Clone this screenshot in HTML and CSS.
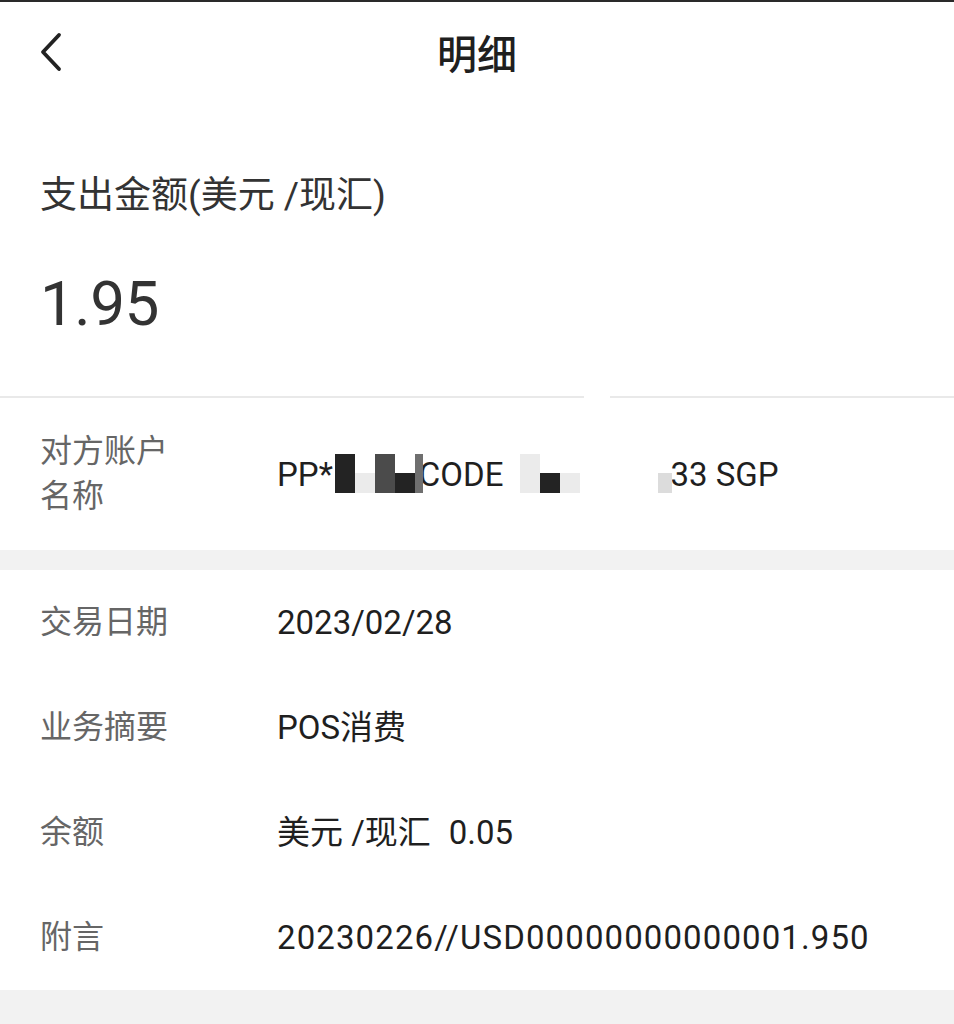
FILE: index.html
```html
<!DOCTYPE html>
<html lang="zh-CN">
<head>
<meta charset="utf-8">
<title>明细</title>
<link rel="stylesheet" href="styles.css">
</head>
<body>
<div class="page">
  <header class="topbar">
    <span class="back" aria-label="返回">
      <svg width="24" height="40" viewBox="0 0 24 40"><path d="M19 3 L3 20 L19 37" fill="none" stroke="#222" stroke-width="3.8" stroke-linecap="round" stroke-linejoin="round"/></svg>
    </span>
    <h1 class="title">明细</h1>
  </header>

  <section class="summary">
    <div class="sum-label">支出金额(美元 /现汇)</div>
    <div class="sum-amount">1.95</div>
  </section>

  <div class="divider"><span class="seg seg-left"></span><span class="seg seg-right"></span></div>

  <div class="row row-tall">
    <div class="label label-wrap">对方账户<br>名称</div>
    <div class="value">
      <span>PP*</span>
      <span class="mz mz1">
        <i class="c-d r2"></i><i></i><i class="c-m r2"></i><i></i><i class="c-g r2"></i>
        <i class="c-l"></i><i class="c-d"></i>
      </span>
      <span>CODE</span>
      <span class="mz mz2">
        <i class="c-l r2"></i><i></i><i></i><i></i><i></i>
        <i class="c-d"></i><i class="c-l"></i><i></i><i class="c-x"></i>
      </span>
      <span>33 SGP</span>
    </div>
  </div>

  <div class="band"></div>

  <div class="row">
    <div class="label">交易日期</div>
    <div class="value">2023/02/28</div>
  </div>
  <div class="row">
    <div class="label">业务摘要</div>
    <div class="value">POS消费</div>
  </div>
  <div class="row">
    <div class="label">余额</div>
    <div class="value">美元 /现汇<span class="gap"></span>0.05</div>
  </div>
  <div class="row">
    <div class="label">附言</div>
    <div class="value value-long">20230226//USD00000000000001.950</div>
  </div>

  <div class="band band-bottom"></div>
</div>
</body>
</html>
```

FILE: styles.css
```css
* { box-sizing: border-box; }

html, body {
  margin: 0;
  padding: 0;
  background: #ffffff;
}

body {
  font-family: Roboto, "Noto Sans CJK SC", sans-serif;
  color: #1f1f1f;
}

.page {
  width: 954px;
  border-top: 2px solid #2a2a2a;
}

.topbar {
  position: relative;
  height: 102px;
  display: flex;
  align-items: center;
  justify-content: center;
}

.back {
  position: absolute;
  left: 40px;
  top: 30px;
  display: block;
  width: 24px;
  height: 40px;
}

.back svg { display: block; }

.title {
  margin: 0;
  margin-top: -2px;
  font-family: "Noto Sans CJK SC", sans-serif;
  font-size: 40px;
  font-weight: 500;
  color: #1f1f1f;
  line-height: 1;
}

.summary {
  height: 292px;
  padding: 68px 40px 0;
}

.sum-label {
  font-size: 37px;
  line-height: 48px;
  color: #333333;
}

.sum-amount {
  margin-top: 44px;
  font-size: 62px;
  line-height: 80px;
  color: #333333;
  letter-spacing: -0.5px;
}

.divider {
  display: flex;
  height: 2px;
}

.seg {
  display: block;
  height: 2px;
  background: #e9e9e9;
}

.seg-left { width: 584px; }
.seg-right { flex: 1; margin-left: 26px; }

.row {
  display: flex;
  align-items: center;
  height: 105px;
  padding-left: 40px;
}

.row-tall {
  height: 152px;
}

.label {
  width: 237px;
  flex: none;
  font-size: 32px;
  line-height: 45px;
  color: #666666;
}

.value {
  display: flex;
  align-items: center;
  font-size: 33px;
  line-height: 45px;
  color: #1f1f1f;
  white-space: pre;
}

.value-long {
  letter-spacing: 1.1px;
}

.gap {
  display: inline-block;
  width: 18px;
}

.band {
  height: 20px;
  background: #f2f2f2;
}

.band-bottom {
  height: 34px;
}

/* pixelated redaction mosaic */
.mz {
  display: grid;
  grid-template-rows: 19px 20px;
  margin-top: -1px;
}

.mz i {
  display: block;
  font-style: normal;
}

.mz1 {
  grid-template-columns: 20px 20px 20px 20px 8px;
  margin-left: 2px;
  margin-right: -4px;
  position: relative;
  z-index: 1;
}

.mz2 {
  grid-template-columns: 20px 20px 20px 78px 14px;
  margin-left: 17px;
  margin-right: -2px;
  position: relative;
  z-index: 1;
}

.mz .r2 { grid-row: span 2; }

.c-d { background: #232323; }
.c-m { background: #4b4b4b; }
.c-g { background: #6f6f6f; }
.c-l { background: #ebebeb; }
.c-x { background: #dcdcdc; }
```
